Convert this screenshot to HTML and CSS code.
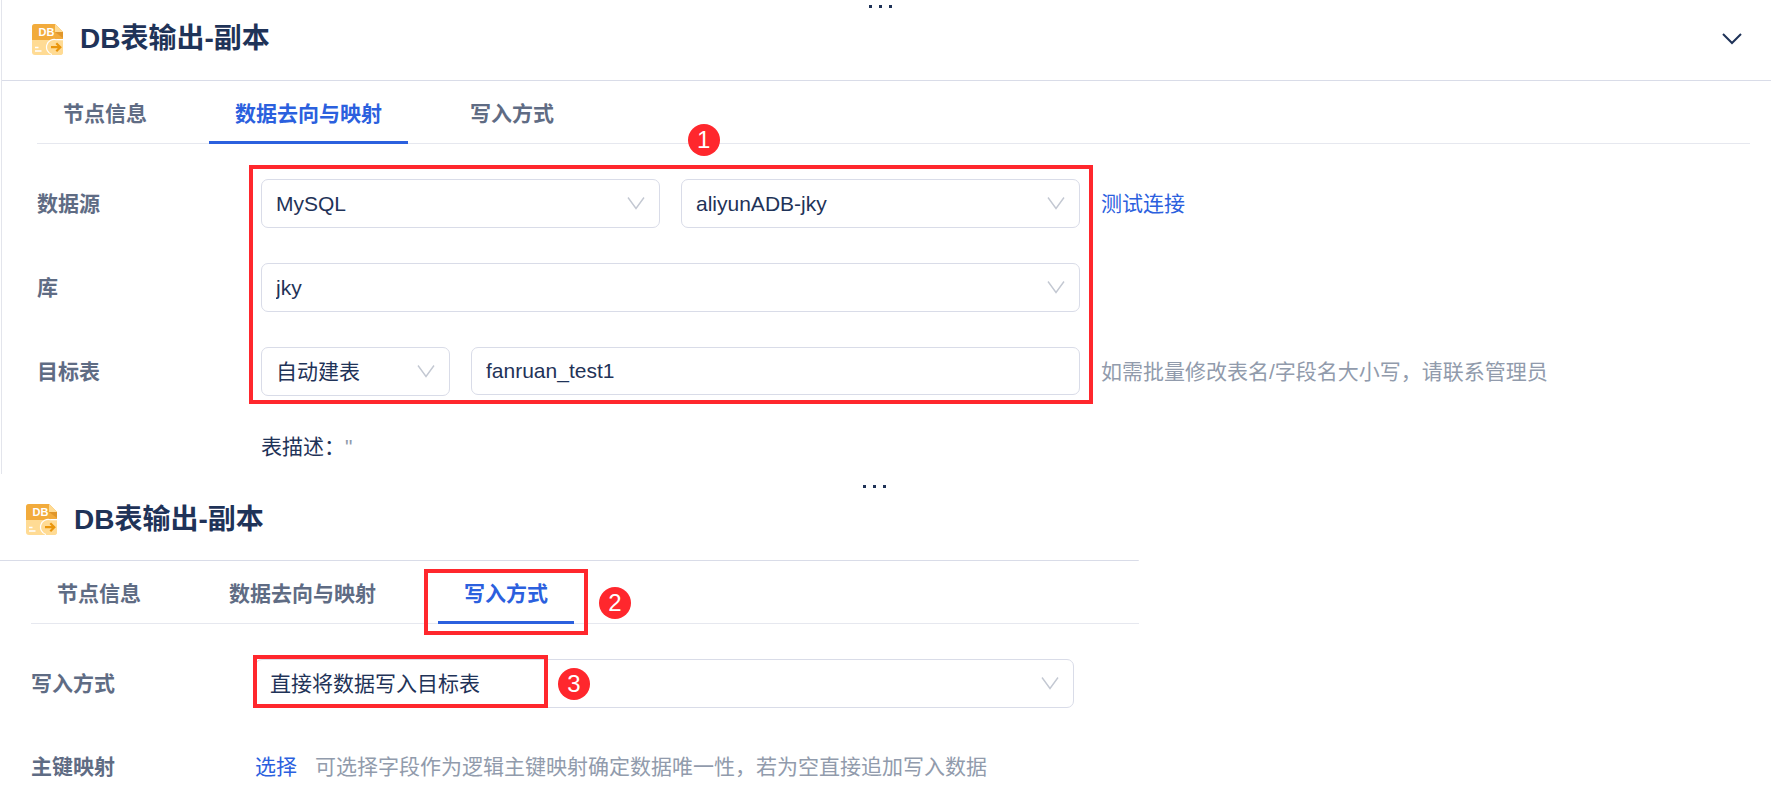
FILE: index.html
```html
<!DOCTYPE html>
<html lang="zh-CN">
<head>
<meta charset="utf-8">
<title>DB表输出-副本</title>
<link rel="stylesheet" href="styles.css">
</head>
<body>
<section class="panel panel-target">
  <header class="panel-header">
    <span class="drag"><i></i><i></i><i></i></span>
    <svg class="db-icon" viewBox="0 0 31 31" aria-hidden="true">
      <path d="M3 0H23L31 8V28a3 3 0 0 1-3 3H3A3 3 0 0 1 0 28V3A3 3 0 0 1 3 0Z" fill="#ffdb94"/>
      <path d="M3 0H23L31 8V16H0V3A3 3 0 0 1 3 0Z" fill="#f2ab3c"/>
      <path d="M23 8H31V14Z" fill="#e0962a"/>
      <path d="M23 0L31 8H23Z" fill="#ffdb94"/>
      <path d="M3 23.500H6.500M3 27H9.500" stroke="#fff" stroke-width="1.500" fill="none"/>
      <path d="M31 16V28a3 3 0 0 1-3 3H20A8 8 0 0 1 24.500 16Z" fill="#ffdb94"/>
      <path d="M31 15.700H24.500A7.600 7.600 0 0 0 20 30.500" fill="none" stroke="#fff" stroke-width="1.200"/>
      <path d="M19 23.200H28M24.300 19.200L28.300 23.200L24.300 27.200" fill="none" stroke="#ea960c" stroke-width="2.200"/>
      <text x="14.500" y="12" text-anchor="middle" class="icon-text">DB</text>
    </svg>
    <h1 class="title">DB表输出-副本</h1>
    <button class="collapse" type="button" aria-label="收起">
      <svg width="20" height="12" viewBox="0 0 20 12"><path d="M1 1L10 10L19 1" fill="none" stroke="#1f3358" stroke-width="2"/></svg>
    </button>
  </header>
  <nav class="tabs">
    <button class="tab" type="button">节点信息</button>
    <button class="tab active" type="button">数据去向与映射</button>
    <button class="tab" type="button">写入方式</button>
  </nav>
  <form class="form">
    <label class="label row1" for="source">数据源</label>
    <div class="controls row1">
      <div class="select grow">
        <select id="source"><option>MySQL</option></select>
        <svg class="arrow" viewBox="0 0 18 13"><path d="M1 0.500L9 11.500L17 0.500"/></svg>
      </div>
      <div class="select grow">
        <select aria-label="数据连接"><option>aliyunADB-jky</option></select>
        <svg class="arrow" viewBox="0 0 18 13"><path d="M1 0.500L9 11.500L17 0.500"/></svg>
      </div>
    </div>
    <a class="link aside row1" href="#">测试连接</a>

    <label class="label row2" for="schema">库</label>
    <div class="controls row2">
      <div class="select grow">
        <select id="schema"><option>jky</option></select>
        <svg class="arrow" viewBox="0 0 18 13"><path d="M1 0.500L9 11.500L17 0.500"/></svg>
      </div>
    </div>

    <label class="label row3" for="table">目标表</label>
    <div class="controls row3">
      <div class="select mode">
        <select aria-label="建表方式"><option>自动建表</option></select>
        <svg class="arrow" viewBox="0 0 18 13"><path d="M1 0.500L9 11.500L17 0.500"/></svg>
      </div>
      <input class="input grow" id="table" type="text" value="fanruan_test1">
    </div>
    <span class="hint aside row3">如需批量修改表名/字段名大小写，请联系管理员</span>

    <p class="description">表描述：<span class="hint">"</span></p>
    <div class="highlight area"><span class="badge">1</span></div>
  </form>
</section>

<section class="panel panel-write">
  <header class="panel-header">
    <span class="drag"><i></i><i></i><i></i></span>
    <svg class="db-icon" viewBox="0 0 31 31" aria-hidden="true">
      <path d="M3 0H23L31 8V28a3 3 0 0 1-3 3H3A3 3 0 0 1 0 28V3A3 3 0 0 1 3 0Z" fill="#ffdb94"/>
      <path d="M3 0H23L31 8V16H0V3A3 3 0 0 1 3 0Z" fill="#f2ab3c"/>
      <path d="M23 8H31V14Z" fill="#e0962a"/>
      <path d="M23 0L31 8H23Z" fill="#ffdb94"/>
      <path d="M3 23.500H6.500M3 27H9.500" stroke="#fff" stroke-width="1.500" fill="none"/>
      <path d="M31 16V28a3 3 0 0 1-3 3H20A8 8 0 0 1 24.500 16Z" fill="#ffdb94"/>
      <path d="M31 15.700H24.500A7.600 7.600 0 0 0 20 30.500" fill="none" stroke="#fff" stroke-width="1.200"/>
      <path d="M19 23.200H28M24.300 19.200L28.300 23.200L24.300 27.200" fill="none" stroke="#ea960c" stroke-width="2.200"/>
      <text x="14.500" y="12" text-anchor="middle" class="icon-text">DB</text>
    </svg>
    <h2 class="title">DB表输出-副本</h2>
  </header>
  <nav class="tabs">
    <button class="tab" type="button">节点信息</button>
    <button class="tab" type="button">数据去向与映射</button>
    <div class="tab-slot">
      <button class="tab active" type="button">写入方式</button>
      <div class="highlight around-tab"><span class="badge">2</span></div>
    </div>
  </nav>
  <form class="form">
    <label class="label row1" for="write">写入方式</label>
    <div class="controls row1">
      <div class="select grow">
        <select id="write"><option>直接将数据写入目标表</option></select>
        <svg class="arrow" viewBox="0 0 18 13"><path d="M1 0.500L9 11.500L17 0.500"/></svg>
        <div class="highlight over-value"><span class="badge">3</span></div>
      </div>
    </div>
    <span class="label key">主键映射</span>
    <p class="key-value"><a class="link" href="#">选择</a><span class="hint">可选择字段作为逻辑主键映射确定数据唯一性，若为空直接追加写入数据</span></p>
  </form>
</section>
</body>
</html>
```
FILE: styles.css
```css
* { box-sizing: border-box; }

body {
  margin: 0;
  background: #fff;
  color: #1f3358;
  font: 21px/32px "Liberation Sans", "Noto Sans CJK SC", sans-serif;
}

button, input, select { font: inherit; color: inherit; }
a { text-decoration: none; }
p, h1, h2 { margin: 0; }

.icon-text { fill: #fff; font: bold 11px "Liberation Sans", sans-serif; }

.panel-target {
  margin-left: 1px;
  border-left: 1px solid #e3e5ec;
  padding-bottom: 11px;
  --start: 35px;
  --end: 21px;
}
.panel-write {
  margin-top: 6px;
  --start: 31px;
  --end: 27px;
}

.panel-header {
  position: relative;
  display: flex;
  align-items: center;
  gap: 17px;
  height: 81px;
  padding: 0 29px 2px calc(var(--start) - 5px);
  border-bottom: 1px solid #d9dce8;
}
.panel-write .panel-header {
  border-bottom: 0;
  background: linear-gradient(#d9dce8, #d9dce8) left bottom / 64.3% 1px no-repeat;
}

.drag {
  position: absolute;
  top: 5px;
  left: 50%;
  display: flex;
  gap: 7px;
  margin-left: -18px;
}
.panel-write .drag { margin-left: -23px; }
.drag i { width: 3px; height: 3px; background: #1f3358; }

.db-icon { width: 31px; height: 31px; }
.title { font-size: 28px; line-height: 40px; font-weight: 700; }
.collapse {
  display: flex;
  margin-left: auto;
  padding: 0;
  border: 0;
  background: none;
}

.tabs {
  display: flex;
  gap: 36px;
  height: 63px;
  margin: 0 var(--end) 0 var(--start);
  box-shadow: inset 0 -1px #e6e8ef;
}
.panel-write .tabs { width: calc(64.3% - var(--start)); }
.tab {
  height: 63px;
  padding: 5px 26px 0;
  border: 0;
  border-bottom: 3px solid transparent;
  background: none;
  color: #5f6c84;
  font-weight: 700;
}
.tab.active { color: #2b60de; border-color: #2b60de; }
.tab-slot { position: relative; }

.form {
  position: relative;
  display: grid;
  grid-template-columns: 224px minmax(0, 819fr) minmax(0, 670fr);
  row-gap: 35px;
  align-items: center;
  padding: 35px var(--end) 0 var(--start);
}
.panel-target .form { grid-template-rows: 49px 49px 49px 32px; }
.form > .aside { margin-left: 21px; }
.row1 { grid-row: 1; }
.row2 { grid-row: 2; }
.row3 { grid-row: 3; }
.label { grid-column: 1; color: #5f6c84; font-weight: 700; }
.controls { grid-column: 2; display: flex; gap: 21px; }
.aside { grid-column: 3; white-space: nowrap; }
.description { grid-area: 4 / 2; }
.link { color: #2b60de; }
.hint { color: #919bac; }

.grow { flex: 1; min-width: 0; }
.mode { flex: 0 0 189px; }
.select { position: relative; }
.select select, .input {
  width: 100%;
  padding: 0 14px;
  border: 1px solid #d9dce8;
  border-radius: 7px;
  background: #fff;
  outline: 0;
}
.select select { display: block; height: 49px; appearance: none; }
.input { height: 48px; }
.arrow {
  position: absolute;
  top: 18px;
  right: 15px;
  width: 18px;
  height: 13px;
  fill: none;
  stroke: #c3c8d2;
  stroke-width: 1.4;
  pointer-events: none;
}

.key, .key-value { grid-row: 2; padding-top: 8px; }
.key-value { grid-column: 2 / 4; display: flex; gap: 18px; }

.highlight { border: 4px solid #ff272d; pointer-events: none; }
.area {
  position: relative;
  grid-area: 1 / 2 / 4 / 3;
  align-self: stretch;
  margin: -14px -13px -8px -12px;
}
.around-tab { position: absolute; inset: 8px -14px -11px; }
.over-value { position: absolute; top: -4px; bottom: 0; left: -2px; width: 36%; }

.badge {
  position: absolute;
  width: 32px;
  height: 32px;
  border-radius: 50%;
  background: #ff272d;
  color: #fff;
  font-size: 24px;
  text-align: center;
}
.area .badge { top: -45px; left: 52%; }
.around-tab .badge { top: 14px; right: -47px; }
.over-value .badge { top: 9px; right: -46px; }
```
